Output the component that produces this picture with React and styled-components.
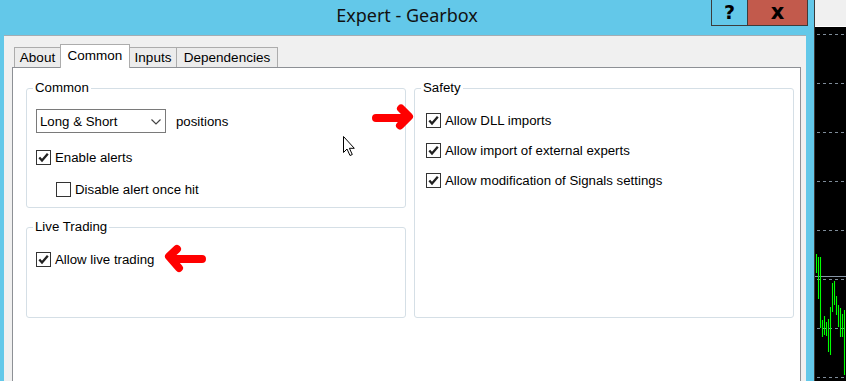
import styled, { createGlobalStyle } from 'styled-components';

const Global = createGlobalStyle`
  html, body {
    margin: 0;
    padding: 0;
    background: #000;
    overflow: hidden;
  }
  body {
    font-family: "Liberation Sans", Arial, sans-serif;
    color: #000;
  }
`;

const Screen = styled.div`
  position: relative;
  display: flex;
  width: 846px;
  height: 381px;
  overflow: hidden;
`;

const Window = styled.div`
  flex: none;
  width: 814px;
  display: flex;
  flex-direction: column;
  background: #63c8e9;
`;

const TitleBar = styled.div`
  flex: none;
  height: 35px;
  display: grid;
  grid-template-columns: 1fr auto 1fr;
  align-items: start;
`;

const Title = styled.div`
  grid-column: 2;
  margin-top: 3px;
  font-family: "Noto Sans", "Open Sans", sans-serif;
  font-size: 18px;
  line-height: 24px;
  color: #111;
`;

const Controls = styled.div`
  grid-column: 3;
  justify-self: end;
  margin-right: 6px;
  display: flex;
  height: 25px;
  border: 1px solid #3c3c3c;
  border-top: none;
`;

const CtrlButton = styled.div`
  width: ${(p) => p.$w}px;
  display: flex;
  align-items: center;
  justify-content: center;
  background: ${(p) => (p.$close ? '#c25a4c' : 'transparent')};
  font: bold ${(p) => (p.$close ? 21 : 19)}px "DejaVu Sans", sans-serif;
  line-height: 1;
  color: #000;
  & + & {
    border-left: 1px solid #3c3c3c;
  }
`;

const Body = styled.div`
  flex: 1;
  min-height: 0;
  margin: 0 8px 0 4px;
  background: #f0f0f0;
  border-top: 1px solid #a3adb4;
  display: flex;
  flex-direction: column;
`;

const TabStrip = styled.div`
  flex: none;
  display: flex;
  align-items: flex-end;
  height: 23px;
  margin-top: 8px;
  padding-left: 10px;
`;

const Tab = styled.div`
  position: relative;
  z-index: ${(p) => (p.$active ? 2 : 1)};
  box-sizing: border-box;
  width: ${(p) => p.$w}px;
  height: ${(p) => (p.$active ? 24 : 20)}px;
  margin-bottom: ${(p) => (p.$active ? -1 : 0)}px;
  background: ${(p) => (p.$active ? '#fff' : '#ececec')};
  border: 1px solid #acacac;
  border-bottom: none;
  font-size: 13.5px;
  line-height: ${(p) => (p.$active ? 21 : 19)}px;
  text-align: center;
  & + & {
    margin-left: -1px;
  }
`;

const Panel = styled.div`
  flex: none;
  height: 330px;
  margin: 0 5px 0 8px;
  background: #fff;
  border: 1px solid #8d9095;
  padding: 12px 6px 0 13px;
  display: grid;
  grid-template-columns: 380px 380px;
  column-gap: 8px;
  align-content: start;
`;

const Column = styled.div`
  display: flex;
  flex-direction: column;
  gap: 11px;
`;

const Group = styled.fieldset`
  margin: 0;
  padding: 0;
  min-width: 0;
  border: 1px solid #d5dfe6;
  border-radius: 3px;
`;

const Legend = styled.legend`
  margin-left: 6px;
  padding: 0 2px;
  font-size: 13.25px;
  line-height: 16px;
`;

const GroupBody = styled.div`
  display: flex;
  flex-direction: column;
  align-items: flex-start;
  gap: ${(p) => p.$gap}px;
  padding: ${(p) => p.$pad};
`;

const Row = styled.div`
  display: flex;
  align-items: center;
  gap: ${(p) => p.$gap || 4}px;
  height: ${(p) => p.$h || 16}px;
  margin-left: ${(p) => p.$indent || 0}px;
  font-size: 13.25px;
`;

const Label = styled.span`
  line-height: 16px;
  padding-top: 2px;
  white-space: nowrap;
`;

const Box = styled.span`
  box-sizing: border-box;
  width: 15px;
  height: 15px;
  border: 1px solid #333;
  background: #fff;
  display: flex;
  align-items: center;
  justify-content: center;
`;

const Select = styled.div`
  box-sizing: border-box;
  width: 130px;
  height: 24px;
  border: 1px solid #7a7a7a;
  background: #fff;
  display: flex;
  align-items: center;
  justify-content: space-between;
  padding: 1px 4px 0 3px;
  font-size: 13.25px;
`;

const Side = styled.div`
  flex: 1;
  display: flex;
  flex-direction: column;
  border-left: 1px solid #3a3a3a;
`;

const SideHeader = styled.div`
  flex: none;
  height: 26px;
  background: #f0f0f0;
  border-bottom: 1px solid #fff;
`;

const Chart = styled.div`
  flex: 1;
  background: #000;
  display: flex;
`;

const Overlay = styled.svg`
  position: absolute;
  left: 0;
  top: 0;
  pointer-events: none;
`;

function Check({ checked, label, indent }) {
  return (
    <Row $indent={indent}>
      <Box>
        {checked && (
          <svg width="13" height="13" viewBox="0 0 13 13">
            <path d="M2.3 6.6 L5 9.6 L10.8 2.8" fill="none" stroke="#222" strokeWidth="2.3" />
          </svg>
        )}
      </Box>
      <Label>{label}</Label>
    </Row>
  );
}

const bars = [
  [816.5, 254, 273], [818.5, 257, 299], [820.5, 257, 328], [822.5, 320, 337],
  [824.5, 316, 335], [826.5, 322, 336], [828.5, 319, 352], [830.5, 307, 355],
  [832.5, 283, 312], [834.5, 281, 305], [836.5, 296, 315], [838.5, 305, 327],
  [840.5, 308, 337], [842.5, 314, 337], [844.5, 310, 375],
];

const grid = [34, 83, 132, 181, 230, 279, 328, 377];

export default function App() {
  return (
    <Screen>
      <Global />
      <Window>
        <TitleBar>
          <Title>Expert - Gearbox</Title>
          <Controls>
            <CtrlButton $w={35}>?</CtrlButton>
            <CtrlButton $w={59} $close>x</CtrlButton>
          </Controls>
        </TitleBar>
        <Body>
          <TabStrip>
            <Tab $w={47}>About</Tab>
            <Tab $w={70} $active>Common</Tab>
            <Tab $w={48}>Inputs</Tab>
            <Tab $w={102}>Dependencies</Tab>
          </TabStrip>
          <Panel>
            <Column>
              <Group>
                <Legend>Common</Legend>
                <GroupBody $gap={16} $pad="13px 0 10px 9px">
                  <Row $h={24} $gap={10}>
                    <Select>
                      <span>Long &amp; Short</span>
                      <svg width="10" height="6" viewBox="0 0 10 6">
                        <path d="M0.5 0.5 L5 5 L9.5 0.5" fill="none" stroke="#444" strokeWidth="1.2" />
                      </svg>
                    </Select>
                    <Label>positions</Label>
                  </Row>
                  <Check checked label="Enable alerts" />
                  <Check indent={20} label="Disable alert once hit" />
                </GroupBody>
              </Group>
              <Group>
                <Legend>Live Trading</Legend>
                <GroupBody $gap={0} $pad="16px 0 50px 9px">
                  <Check checked label="Allow live trading" />
                </GroupBody>
              </Group>
            </Column>
            <Group>
              <Legend>Safety</Legend>
              <GroupBody $gap={14} $pad="16px 0 0 11px">
                <Check checked label="Allow DLL imports" />
                <Check checked label="Allow import of external experts" />
                <Check checked label="Allow modification of Signals settings" />
              </GroupBody>
            </Group>
          </Panel>
        </Body>
      </Window>
      <Side>
        <SideHeader />
        <Chart>
          <svg width="31" height="354" viewBox="815 27 31 354">
            {grid.map((y) => (
              <line key={y} x1="817" x2="846" y1={y + 0.5} y2={y + 0.5} stroke="#7f8c99" strokeDasharray="3 3" />
            ))}
            <line x1="815" x2="846" y1="276.5" y2="276.5" stroke="#8795a5" />
            {bars.map(([x, a, b]) => (
              <line key={x} x1={x} x2={x} y1={a} y2={b} stroke="#00ff00" strokeWidth="1.1" />
            ))}
          </svg>
        </Chart>
      </Side>
      <Overlay width="846" height="381" viewBox="0 0 846 381">
        <g fill="none" stroke="#ff0000" strokeWidth="8" strokeLinecap="round" strokeLinejoin="round">
          <path d="M376 118 L407 118 M401 108.5 L409 116.5 L400 125.5" />
          <path d="M202 259 L172 259 M177 249 L169 256.5 L179 268" />
        </g>
        <path
          d="M343.5 136.5 L343.5 152.5 L347 149 L350 155.5 L352.3 154.5 L349.4 148.3 L354.3 148.3 Z"
          fill="#fff"
          stroke="#000"
          strokeWidth="1"
        />
      </Overlay>
    </Screen>
  );
}
